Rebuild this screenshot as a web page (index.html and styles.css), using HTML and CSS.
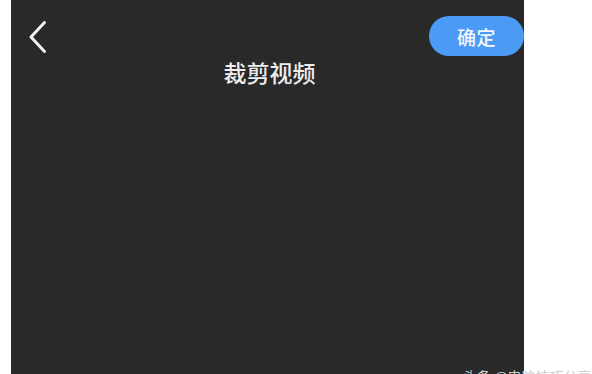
FILE: index.html
```html
<!DOCTYPE html>
<html lang="zh">
<head>
<meta charset="utf-8">
<title>裁剪视频</title>
<link rel="stylesheet" href="styles.css">
</head>
<body>
<div class="page">
  <div class="panel">
    <div class="topbar">
      <button class="back" aria-label="返回">
        <svg width="20" height="34" viewBox="0 0 20 34">
          <path d="M16.5 2.5 L3 17 L16.5 31.5" fill="none" stroke="#f2f2f2" stroke-width="3" stroke-linecap="round" stroke-linejoin="round"/>
        </svg>
      </button>
      <button class="confirm">确定</button>
    </div>
    <h1 class="title">裁剪视频</h1>
  </div>
  <div class="watermark">头条 @电脑技巧分享</div>
</div>
</body>
</html>
```

FILE: styles.css
```css
html, body {
  margin: 0;
  padding: 0;
  background: #ffffff;
  font-family: "Noto Sans CJK SC", "Noto Sans", sans-serif;
  overflow: hidden;
}
.page {
  position: relative;
  width: 592px;
  height: 374px;
  overflow: hidden;
}
.panel {
  margin-left: 11px;
  width: 513px;
  height: 374px;
  background: #292929;
  padding-top: 16px;
  box-sizing: border-box;
}
.topbar {
  display: flex;
  justify-content: space-between;
  align-items: flex-start;
}
.back {
  margin: 4px 0 0 17px;
  padding: 0;
  border: 0;
  background: none;
  width: 20px;
  height: 34px;
  display: block;
}
.back svg { display: block; }
.confirm {
  width: 95px;
  height: 40px;
  border: 0;
  border-radius: 20px;
  background: #4b9bf5;
  color: #f4f7fb;
  font-family: "Noto Sans CJK SC", sans-serif;
  font-size: 19px;
  font-weight: 500;
  line-height: 42px;
  padding: 0;
  letter-spacing: 0.5px;
}
.title {
  margin: 2px 0 0 0;
  text-align: center;
  color: #eeeeee;
  font-size: 23px;
  font-weight: 500;
  line-height: 28px;
  padding-left: 4px;
}
.watermark {
  position: absolute;
  left: 463px;
  top: 367px;
  font-size: 14px;
  line-height: 18px;
  color: #d0d0d0;
  white-space: nowrap;
}
```
